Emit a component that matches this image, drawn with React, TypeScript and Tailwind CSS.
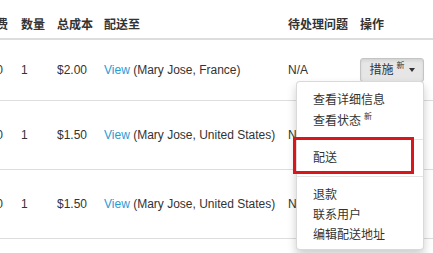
import React from "react";

type Row = { fee: string; qty: string; total: string; addr: string; issue: string; height: string };

const ROWS: Row[] = [
  { fee: "$0.00", qty: "1", total: "$2.00", addr: "(Mary Jose, France)", issue: "N/A", height: "h-[61px]" },
  { fee: "$0.00", qty: "1", total: "$1.50", addr: "(Mary Jose, United States)", issue: "N/A", height: "h-[69px]" },
  { fee: "$0.00", qty: "1", total: "$1.50", addr: "(Mary Jose, United States)", issue: "N/A", height: "h-[69px]" },
];

function ActionMenu() {
  return (
    <div className="absolute right-0 top-[23px] z-10 w-[128px] rounded-[4px] border border-black/15 bg-white pb-[4px] pt-[7px] shadow-[0_5px_10px_rgba(0,0,0,0.2)]">
      <div className="flex h-[21px] items-center pl-[16px]">查看详细信息</div>
      <div className="flex h-[21px] items-center pl-[16px]">
        查看状态<sup className="ml-[3px] text-[8px]">新</sup>
      </div>
      <div className="my-[8px] h-px bg-[#e5e5e5]" />
      <div className="flex h-[20px] items-center pl-[16px]">配送</div>
      <div className="my-[8px] h-px bg-[#e5e5e5]" />
      <div className="flex h-[20px] items-center pl-[16px]">退款</div>
      <div className="flex h-[20px] items-center pl-[16px]">联系用户</div>
      <div className="flex h-[20px] items-center pl-[16px]">编辑配送地址</div>
      {/* highlight box */}
      <div className="absolute left-[-4px] top-[55px] h-[37px] w-[121px] border-[3px] border-[#d9161c]" />
    </div>
  );
}

export default function App() {
  return (
    <div
      className="h-[253px] w-[433px] overflow-hidden bg-white text-[12px] text-[#333]"
      style={{ fontFamily: '"Liberation Sans", "Noto Sans CJK SC", sans-serif' }}
    >
      <div className="-ml-[42px] w-[500px]">
        <div className="flex h-[40px] items-center border-b-2 border-[#ddd] pt-[12px] font-bold">
          <div className="w-[55px] shrink-0 whitespace-nowrap pl-[14px]">运输费</div>
          <div className="w-[36px] shrink-0 pl-[8px]">数量</div>
          <div className="w-[47px] shrink-0 pl-[8px]">总成本</div>
          <div className="w-[184px] shrink-0 pl-[8px]">配送至</div>
          <div className="w-[72px] shrink-0 pl-[8px]">待处理问题</div>
          <div className="flex-1 pl-[8px]">操作</div>
        </div>
        {ROWS.map((row, i) => (
          <div key={i} className={`flex items-center border-b border-[#ddd] ${row.height}`}>
            <div className="w-[55px] shrink-0 pl-[15px]">{row.fee}</div>
            <div className="w-[36px] shrink-0 pl-[8px]">{row.qty}</div>
            <div className="w-[47px] shrink-0 pl-[8px]">{row.total}</div>
            <div className="w-[184px] shrink-0 whitespace-nowrap pl-[8px]">
              <span className="text-[#2a9bd3]">View</span> {row.addr}
            </div>
            <div className="w-[72px] shrink-0 pl-[8px]">{row.issue}</div>
            <div className="flex-1 pl-[8px]">
              {i === 0 && (
                <div className="relative w-[64px]">
                  <button className="flex h-[24px] w-[64px] items-center justify-center rounded-[3px] border border-[#c4c4c4] bg-[#e6e6e6] shadow-[inset_0_2px_3px_rgba(0,0,0,0.08),0_1px_1px_rgba(0,0,0,0.05)]">
                    <span>措施</span>
                    <sup className="ml-[3px] text-[8px]">新</sup>
                    <span className="ml-[4px] h-0 w-0 border-x-[3px] border-t-[4px] border-x-transparent border-t-[#333]" />
                  </button>
                  <ActionMenu />
                </div>
              )}
            </div>
          </div>
        ))}
      </div>
    </div>
  );
}
